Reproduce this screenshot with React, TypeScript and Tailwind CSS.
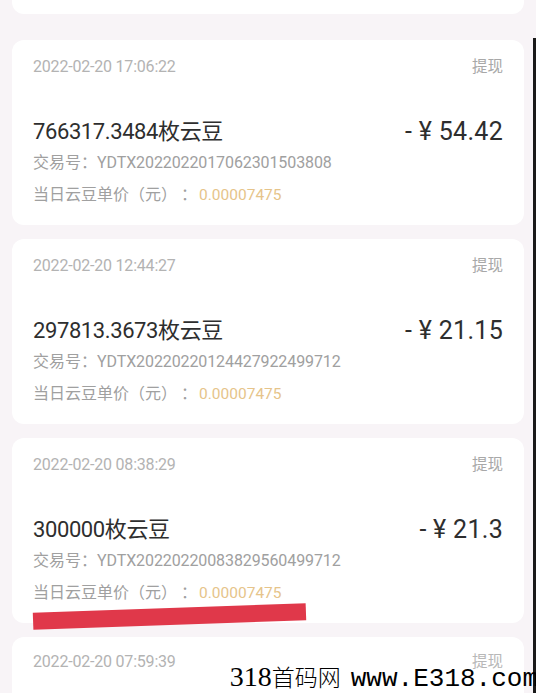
import React from 'react';

type Record = {
  time: string;
  beans: string;
  amount: string;
  tradeNo: string;
  price: string;
};

const records: Record[] = [
  {
    time: '2022-02-20 17:06:22',
    beans: '766317.3484',
    amount: '54.42',
    tradeNo: 'YDTX2022022017062301503808',
    price: '0.00007475',
  },
  {
    time: '2022-02-20 12:44:27',
    beans: '297813.3673',
    amount: '21.15',
    tradeNo: 'YDTX20220220124427922499712',
    price: '0.00007475',
  },
  {
    time: '2022-02-20 08:38:29',
    beans: '300000',
    amount: '21.3',
    tradeNo: 'YDTX20220220083829560499712',
    price: '0.00007475',
  },
];

const sans = 'font-["Roboto","Noto_Sans_CJK_SC",sans-serif]';

function RecordCard({ r, marked }: { r: Record; marked?: boolean }) {
  return (
    <div className="relative rounded-xl bg-white px-[21px] pt-[17px] pb-[18px]">
      <div className="flex h-5 items-center justify-between text-[16px] leading-5 text-[#b3b3b3]">
        <span className="tracking-[-0.2px]">{r.time}</span>
        <span className="text-[15.5px] text-[#a8a8a8]">提现</span>
      </div>
      <div className="mt-[40px] flex h-[30px] items-center justify-between text-[#2e2e2e]">
        <span className="text-[22px] leading-[30px] tracking-[-0.4px]">{r.beans}枚云豆</span>
        <span className="text-[25px] leading-[30px] tracking-[0.3px]">
          - ¥ {r.amount}
        </span>
      </div>
      <div className="mt-[4px] h-6 text-[16px] leading-6 text-[#a0a0a0]">
        交易号：<span className="tracking-[-0.1px]">{r.tradeNo}</span>
      </div>
      <div className="mt-[8px] flex h-6 items-center text-[16px] leading-6 text-[#a0a0a0]">
        <span>当日云豆单价（元）</span>
        <span className="ml-[4px]">：</span>
        <span className="ml-[2px] text-[15.5px] text-[#e6c48a]">{r.price}</span>
      </div>
      {marked && (
        <div className="absolute left-[21px] top-[170px] h-[17px] w-[273px] -rotate-[2deg] bg-[#e0384a]" />
      )}
    </div>
  );
}

export default function App() {
  return (
    <div className={`relative h-[693px] w-[536px] overflow-hidden bg-[#f8f4f7] ${sans}`}>
      <div className="flex flex-col gap-[14px] px-[12px]">
        <div className="-mt-[160px] h-[174px] rounded-xl bg-white" />
        <div className="mt-[12px]">
          <RecordCard r={records[0]} />
        </div>
        <RecordCard r={records[1]} />
        <RecordCard r={records[2]} marked />
        <div className="rounded-xl bg-white px-[21px] pt-[15px] pb-10">
          <div className="flex h-5 items-center justify-between text-[16px] leading-5 text-[#b3b3b3]">
            <span className="tracking-[-0.2px]">2022-02-20 07:59:39</span>
            <span className="text-[15.5px] text-[#b8b8b8]">提现</span>
          </div>
        </div>
      </div>

      <div className="absolute right-0 top-[38px] bottom-0 w-[3px] bg-[#1a1a1a]" />

      <div className="absolute bottom-[1px] right-[-2px] flex items-baseline whitespace-nowrap text-black">
        <span className='font-["Liberation_Serif",serif] text-[28px] leading-none'>318</span>
        <span className='font-["Noto_Sans_CJK_SC",sans-serif] text-[23px] font-light leading-none'>首码网</span>
        <span className='ml-[10px] font-["Liberation_Mono",monospace] text-[26px] leading-none'>www.E318.com</span>
      </div>
    </div>
  );
}
